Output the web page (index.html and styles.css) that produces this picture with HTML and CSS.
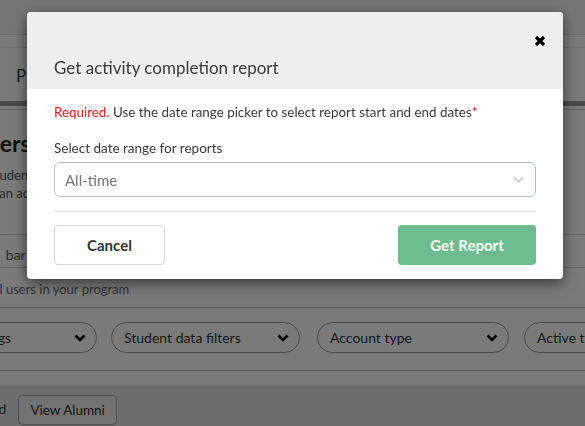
FILE: index.html
```html
<!DOCTYPE html>
<html lang="en">
<head>
<meta charset="utf-8">
<title>Get activity completion report</title>
<link rel="stylesheet" href="styles.css">
</head>
<body>
<div class="page">
  <div class="topbar"></div>
  <div class="subbar"></div>
  <div class="tabs"><span class="tab">Programs</span></div>
  <div class="tab-rule"></div>
  <div class="content">
    <h1 class="heading">Users</h1>
    <p class="desc"><span class="desc-line desc-a">Students and mentors in your program</span><span class="desc-line desc-b">can add users</span></p>
    <div class="search"><span class="search-text">Search bar</span></div>
    <p class="hint"><span class="hint-link">all</span> users in your program</p>
  </div>
  <div class="filters">
    <div class="pill pill-first"><span>Cohort settings</span><svg class="chev" viewBox="0 0 12 8"><path d="M1.5 1.5 6 6l4.5-4.5"/></svg></div>
    <div class="pill"><span>Student data filters</span><svg class="chev" viewBox="0 0 12 8"><path d="M1.5 1.5 6 6l4.5-4.5"/></svg></div>
    <div class="pill"><span>Account type</span><svg class="chev" viewBox="0 0 12 8"><path d="M1.5 1.5 6 6l4.5-4.5"/></svg></div>
    <div class="pill"><span>Active type</span><svg class="chev" viewBox="0 0 12 8"><path d="M1.5 1.5 6 6l4.5-4.5"/></svg></div>
  </div>
  <div class="lower">
    <span class="lower-text">Archived</span>
    <span class="alumni">View Alumni</span>
  </div>
</div>

<div class="overlay"></div>

<div class="modal">
  <div class="modal-header">
    <button class="close" aria-label="Close"><svg viewBox="0 0 12 12"><path d="M2 2l8 8M10 2l-8 8"/></svg></button>
    <h2 class="modal-title">Get activity completion report</h2>
  </div>
  <div class="modal-body">
    <p class="notice"><span class="req">Required.</span> Use the date range picker to select report start and end dates<span class="req">*</span></p>
    <label class="field-label">Select date range for reports</label>
    <div class="select"><span>All-time</span><svg class="select-chev" viewBox="0 0 12 7"><path d="M1 1l5 5 5-5"/></svg></div>
    <div class="divider"></div>
    <div class="actions">
      <button class="btn btn-cancel">Cancel</button>
      <button class="btn btn-primary">Get Report</button>
    </div>
  </div>
</div>
</body>
</html>
```
FILE: styles.css
```css
* { box-sizing: border-box; }
html, body { margin: 0; padding: 0; }
body {
  width: 585px;
  height: 426px;
  overflow: hidden;
  font-family: Lato, "Open Sans", Arial, sans-serif;
  color: #333;
  background: #fff;
}
.page { width: 585px; height: 426px; overflow: hidden; background: #fff; }
.topbar { height: 35px; background: #f6f6f6; border-bottom: 1px solid #ddd; }
.subbar { height: 13px; border-bottom: 1px solid #ddd; }
.tabs { height: 53px; display: flex; align-items: center; padding-left: 16px; padding-top: 2px; }
.tab { font-size: 17px; color: #444; }
.tab-rule { height: 8px; background: #9a9a9a; border-bottom: 3px solid #fff; box-shadow: 0 1px 0 #ccc; }
.content { margin-left: -27px; }
.heading { margin: 21px 0 0; font-size: 23px; font-weight: 700; line-height: 26px; color: #222; }
.desc { margin: 10px 0 0; font-size: 13px; line-height: 18px; color: #555; }
.desc-line { display: block; white-space: nowrap; }
.desc-a { margin-left: 15px; }
.desc-b { margin-left: 20px; }
.search { margin-top: 32px; height: 34px; border-top: 1px solid #ccc; border-bottom: 1px solid #ccc; display: flex; align-items: center; padding-top: 6px; }
.search-text { margin-left: -15px; font-size: 14px; color: #555; white-space: nowrap; word-spacing: 3px; }
.hint { margin: 12px 0 0 17px; font-size: 13px; line-height: 18px; color: #666; white-space: nowrap; }
.hint-link { color: #3d6fb8; }
.filters { margin-top: 9px; height: 64px; border-top: 1px solid #bbb; border-bottom: 1px solid #bbb; display: flex; align-items: flex-start; padding-top: 14px; gap: 14px; margin-left: -92px; }
.pill { flex: none; width: 189px; height: 31px; border: 1px solid #999; border-radius: 16px; display: flex; align-items: center; justify-content: space-between; padding: 0 10px 0 12px; font-size: 14px; color: #333; white-space: nowrap; }
.pill-first { padding-left: 8px; }
.pill:nth-child(3) { width: 192px; margin-left: 3px; }
.pill:nth-child(4) { margin-left: 1px; }
.chev { flex: none; width: 12px; height: 8px; fill: none; stroke: #000; stroke-width: 2.6; }
.lower { margin-top: 14px; height: 60px; background: #e4e4e4; display: flex; align-items: flex-start; padding-top: 10px; }
.lower-text { margin-left: -48px; font-size: 14px; line-height: 28px; color: #444; }
.alumni { margin-left: 12px; height: 30px; padding: 0 11px; border: 1px solid #aaa; border-radius: 4px; background: #eee; font-size: 13.5px; line-height: 28px; color: #333; }

.overlay { position: fixed; inset: 0; background: rgba(0, 0, 0, 0.52); }

.modal {
  position: absolute;
  left: 27px;
  top: 12px;
  width: 536px;
  background: #fff;
  border-radius: 4px;
  overflow: hidden;
  box-shadow: 0 4px 14px rgba(0, 0, 0, 0.55);
}
.modal-header { height: 77px; background: #eee; padding: 20px 16px 0 27px; display: flex; flex-direction: column; }
.close { align-self: flex-end; width: 14px; height: 18px; padding: 0; border: 0; background: none; display: flex; align-items: center; justify-content: center; }
.close svg { width: 12px; height: 12px; fill: none; stroke: #000; stroke-width: 3.2; }
.modal-title { margin: 8px 0 0; font-size: 17px; font-weight: 400; line-height: 20px; color: #3a3a3a; }
.modal-body { padding: 14px 27px 14px; }
.notice { margin: 0; font-size: 13.4px; line-height: 18px; color: #3a3a3a; white-space: nowrap; }
.req { color: #f21b1b; }
.field-label { display: block; margin-top: 18px; font-size: 13.5px; line-height: 18px; color: #3a3a3a; }
.select { margin-top: 5px; height: 35px; border: 1px solid #b7bcbc; border-radius: 6px; display: flex; align-items: center; justify-content: space-between; padding: 0 11px 0 10px; font-size: 15px; color: #777; }
.select-chev { width: 11px; height: 7px; fill: none; stroke: #c4c4c4; stroke-width: 1.5; }
.divider { margin-top: 14px; height: 1px; background: #ddd; }
.actions { margin-top: 13px; display: flex; justify-content: space-between; }
.btn { height: 40px; border-radius: 4px; font-family: inherit; font-size: 15px; font-weight: 700; cursor: pointer; }
.btn-cancel { width: 111px; background: #fff; border: 1px solid #d6d6d6; color: #333; }
.btn-primary { width: 138px; background: #6dbb8f; border: 0; color: #fff; }
```
